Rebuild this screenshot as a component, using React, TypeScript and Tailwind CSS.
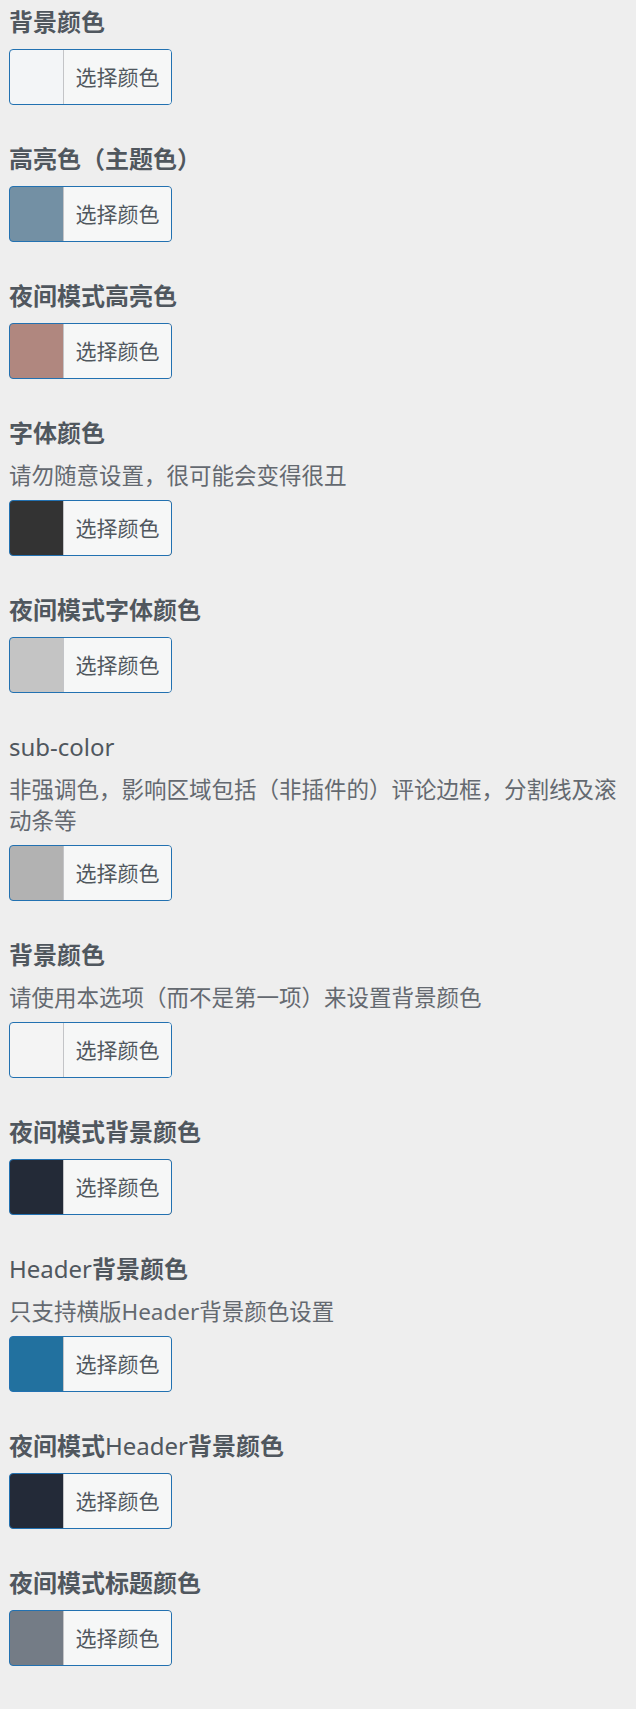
import type { ReactNode } from 'react';

interface ColorControl {
  title: ReactNode;
  description?: ReactNode;
  swatch: string;
  light?: boolean;
}

const latin = (text: string) => <span className="font-normal">{text}</span>;

const controls: ColorControl[] = [
  { title: '背景颜色', swatch: 'bg-[#f3f5f7]', light: true },
  { title: '高亮色（主题色）', swatch: 'bg-[#7390a4]' },
  { title: '夜间模式高亮色', swatch: 'bg-[#b0877f]' },
  { title: '字体颜色', description: '请勿随意设置，很可能会变得很丑', swatch: 'bg-[#333333]' },
  { title: '夜间模式字体颜色', swatch: 'bg-[#c4c4c4]' },
  {
    title: latin('sub-color'),
    description: '非强调色，影响区域包括（非插件的）评论边框，分割线及滚动条等',
    swatch: 'bg-[#b2b2b2]',
  },
  { title: '背景颜色', description: '请使用本选项（而不是第一项）来设置背景颜色', swatch: 'bg-[#f4f4f4]', light: true },
  { title: '夜间模式背景颜色', swatch: 'bg-[#232a37]' },
  {
    title: (
      <>
        {latin('Header')}背景颜色
      </>
    ),
    description: '只支持横版Header背景颜色设置',
    swatch: 'bg-[#22719f]',
  },
  {
    title: (
      <>
        夜间模式{latin('Header')}背景颜色
      </>
    ),
    swatch: 'bg-[#232a38]',
  },
  { title: '夜间模式标题颜色', swatch: 'bg-[#747c86]' },
];

function ColorButton({ swatch }: { swatch: string }) {
  return (
    <button
      type="button"
      className={`flex h-[56px] w-[163px] overflow-hidden rounded-[4px] border border-[#2271b1] p-0 ${swatch}`}
    >
      <span className="w-[53px] flex-none" />
      <span className="flex flex-1 items-center justify-center border-l border-[#c3c4c7] bg-[#f6f7f7] text-[21px] leading-none text-[#50575e]">
        选择颜色
      </span>
    </button>
  );
}

export default function App() {
  return (
    <div
      className="min-h-screen bg-[#eeeeee] px-[9px] pt-[5px]"
      style={{ fontFamily: '"Noto Sans", "Noto Sans CJK SC", sans-serif' }}
    >
      {controls.map((control, index) => (
        <div key={index} className="mb-[37px]">
          <h3 className="mb-[10px] text-[24px] font-bold leading-[34px] text-[#50575e]">{control.title}</h3>
          {control.description && (
            <p className="mb-[9px] text-[22.5px] leading-[31px] text-[#646970]">{control.description}</p>
          )}
          <ColorButton swatch={control.swatch} />
        </div>
      ))}
    </div>
  );
}
